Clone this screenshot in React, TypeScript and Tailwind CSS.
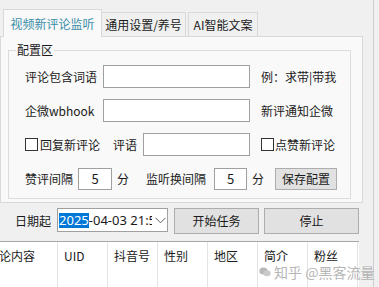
const CJK = "font-['Noto_Sans_CJK_SC',sans-serif]"

function Check() {
  return <span className="block h-[13px] w-[13px] shrink-0 border border-[#333333] bg-white" />
}

function Box({ w, h = 'h-[23px]', value }: { w: string; h?: string; value?: string }) {
  return (
    <div className={`${w} ${h} flex shrink-0 items-center justify-center border border-[#a0a0a0] bg-white text-[13px]`}>
      {value}
    </div>
  )
}

const COLUMNS = ['评论内容', 'UID', '抖音号', '性别', '地区', '简介', '粉丝']

export default function App() {
  return (
    <div className={`flex h-[287px] w-[379px] overflow-hidden bg-[#f0f0f0] text-[12px] leading-[16px] text-[#1a1a1a] ${CJK}`}>
      <div className="relative flex w-[373px] shrink-0 flex-col">
        {/* Tabs */}
        <div className="flex h-[36px] shrink-0 items-end pl-[3px]">
          <div className="relative z-10 -mb-px flex h-[28px] w-[99px] items-center justify-center border border-b-0 border-[#d9d9d9] bg-[#f9f9f9] pt-[1px] text-[#3a8ea8]">
            视频新评论监听
          </div>
          <div className="flex h-[24px] w-[84px] items-center justify-center border border-b-0 border-l-0 border-[#d9d9d9] bg-[#f0f0f0] pt-[1px]">
            通用设置/养号
          </div>
          <div className="ml-[2px] flex h-[24px] w-[70px] items-center justify-center border border-b-0 border-[#d9d9d9] bg-[#f0f0f0] pt-[1px]">
            AI智能文案
          </div>
        </div>

        {/* Tab page */}
        <div className="h-[167px] w-[363px] shrink-0 border border-[#d9d9d9] bg-[#f9f9f9]">
          <fieldset className="ml-[7px] mt-[5px] w-[343px] border border-[#dcdcdc] px-0 pb-[8px] pt-[7px]">
            <legend className="ml-[7px] px-[1px] leading-[16px]">配置区</legend>
            <div className="flex flex-col gap-[11px]">
              <div className="flex h-[23px] items-center pl-[16px]">
                <span className="w-[78px] shrink-0">评论包含词语</span>
                <Box w="w-[147px]" />
                <span className="ml-[11px]">例：求带|带我</span>
              </div>
              <div className="flex h-[23px] items-center pl-[16px]">
                <span className="w-[78px] shrink-0">企微wbhook</span>
                <Box w="w-[147px]" />
                <span className="ml-[11px]">新评通知企微</span>
              </div>
              <div className="flex h-[23px] items-center pl-[16px]">
                <Check />
                <span className="ml-[2px]">回复新评论</span>
                <span className="ml-[13px]">评语</span>
                <div className="ml-[6px]">
                  <Box w="w-[107px]" />
                </div>
                <div className="ml-[11px]">
                  <Check />
                </div>
                <span className="ml-[1px]">点赞新评论</span>
              </div>
              <div className="flex h-[23px] items-center pl-[16px]">
                <span>赞评间隔</span>
                <div className="ml-[5px]">
                  <Box w="w-[34px]" h="h-[22px]" value="5" />
                </div>
                <span className="ml-[5px]">分</span>
                <span className="ml-[17px]">监听换间隔</span>
                <div className="ml-[8px]">
                  <Box w="w-[33px]" h="h-[22px]" value="5" />
                </div>
                <span className="ml-[5px]">分</span>
                <button className="ml-[11px] flex h-[22px] w-[62px] items-center justify-center border border-[#adadad] bg-[#e1e1e1]">
                  保存配置
                </button>
              </div>
            </div>
          </fieldset>
        </div>

        {/* Date + actions */}
        <div className="mt-[5px] flex shrink-0 items-start pl-[15px]">
          <span className="mt-[5px]">日期起</span>
          <div className="ml-[6px] flex h-[24px] w-[111px] items-center border border-[#a0a0a0] bg-white pl-[1px] font-['Noto_Sans',sans-serif] text-[13px] leading-[15px]">
            <span className="flex w-[93px] overflow-hidden whitespace-nowrap">
              <span className="bg-[#0078d7] text-white">2025</span>
              <span>-04-03 21:5</span>
            </span>
            <svg width="11" height="7" viewBox="0 0 11 7" className="ml-[3px]">
              <polyline points="0.5,0.8 5.5,5.8 10.5,0.8" fill="none" stroke="#606060" strokeWidth="1" />
            </svg>
          </div>
          <button className="ml-[6px] flex h-[26px] w-[85px] items-center justify-center border border-[#adadad] bg-[#e1e1e1]">
            开始任务
          </button>
          <button className="ml-[5px] flex h-[26px] w-[95px] items-center justify-center border border-[#adadad] bg-[#e1e1e1]">
            停止
          </button>
        </div>

        {/* Result grid */}
        <div className="mt-[7px] flex w-[359px] flex-1 border-t border-[#a8a8a8] bg-white">
          {COLUMNS.map((c, i) => (
            <div
              key={c}
              className={`${i === 0 ? 'w-[58px]' : 'w-[50px]'} shrink-0 overflow-hidden whitespace-nowrap border-r border-[#e3e3e3] pt-[6px] ${i === 0 ? 'pl-0' : 'pl-[6px]'}`}
            >
              <span className={i === 0 ? 'ml-[-13px] inline-block' : ''}>{c}</span>
            </div>
          ))}
        </div>

        {/* watermark */}
        <div className="pointer-events-none absolute left-[259px] top-[264px] flex items-center gap-[3px] whitespace-nowrap text-[14px] leading-[16px] text-[#a5a5a5] opacity-80">
          <svg width="12" height="10" viewBox="0 0 12 10" className="shrink-0">
            <ellipse cx="4.5" cy="4" rx="4.2" ry="3.5" fill="#a8a8a8" />
            <ellipse cx="8" cy="6.2" rx="3.6" ry="3" fill="#bdbdbd" />
          </svg>
          <span>知乎 @黑客流量</span>
        </div>
      </div>
      <div className="flex-1 border-l border-[#cfcfcf]" />
    </div>
  )
}
